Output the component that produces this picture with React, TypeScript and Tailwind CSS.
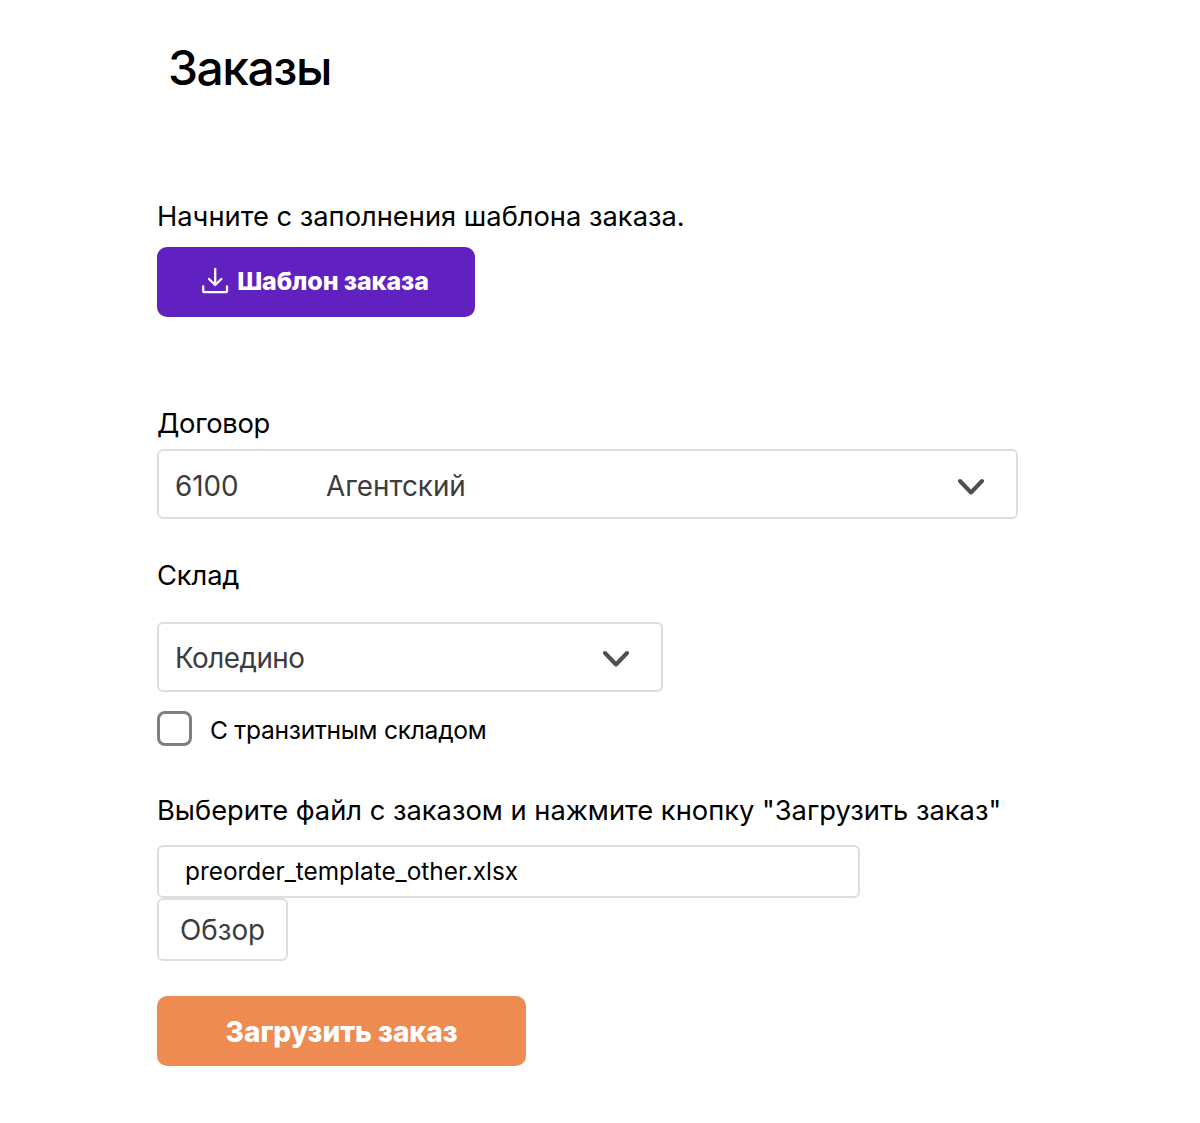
import { useState } from 'react'

const Chevron = () => (
  <svg width="28" height="18" viewBox="0 0 28 18" fill="none">
    <path
      d="M3 4 L14 15.5 L25 4"
      stroke="#4f4f50"
      strokeWidth="4"
      strokeLinecap="round"
      strokeLinejoin="round"
    />
  </svg>
)

const DownloadIcon = () => (
  <svg
    className="mr-2"
    width="28"
    height="28"
    viewBox="0 0 28 28"
    fill="none"
    stroke="currentColor"
    strokeWidth="2.3"
    strokeLinecap="round"
    strokeLinejoin="round"
  >
    <path d="M14.2 1.8v16M8 12l6.2 6 6.2-6M2.2 19.5v4.2q0 1.5 1.5 1.5h20.8q1.5 0 1.5-1.5v-4.2" />
  </svg>
)

const App = () => {
  const [transit, setTransit] = useState(false)

  return (
    <main className="min-h-[1123px] bg-white pl-[157px] font-['Inter','Liberation_Sans',sans-serif] text-[27.3px] leading-8 text-black">
      <h1 className="pt-[39px] pl-[11px] text-[48px] leading-[57px] font-[450] tracking-[-1.5px]">Заказы</h1>

      <section className="mt-[105px]">
        <p className="whitespace-nowrap">Начните с заполнения шаблона заказа.</p>
        <button className="mt-[14px] flex h-[70px] w-[318px] items-center justify-center rounded-[10px] bg-[#6120c0] pr-[2px] pb-0.5 text-[25px] font-extrabold tracking-[-0.1px] text-white">
          <DownloadIcon />
          <span>Шаблон заказа</span>
        </button>
      </section>

      <section className="mt-[91px]">
        <label className="block font-[430] tracking-[-0.3px]">Договор</label>
        <div className="mt-[9px] flex h-[70px] w-[861px] items-center rounded-md border-2 border-[#dedede] pt-[3px] pr-[31px] pl-4 text-[27.8px] text-[#3c3c3e]">
          <span className="w-[151px]">6100</span>
          <span className="flex-1">Агентский</span>
          <Chevron />
        </div>
      </section>

      <section className="mt-[41px]">
        <label className="block font-[430] tracking-[-0.1px]">Склад</label>
        <div className="mt-[30px] flex h-[70px] w-[506px] items-center justify-between rounded-md border-2 border-[#dedede] pt-px pr-[31px] pl-4 text-[27.8px] tracking-[-0.5px] text-[#3c3c3e]">
          <span>Коледино</span>
          <Chevron />
        </div>
        <label className="mt-[18px] flex h-[37px] items-center text-[24.6px] font-[430] tracking-[-0.27px]">
          <input
            type="checkbox"
            checked={transit}
            onChange={(e) => setTransit(e.target.checked)}
            className="mr-[18px] size-[35px] appearance-none rounded-lg border-[3px] border-[#7f7f7f]"
          />
          <span className="pt-[3px]">С транзитным складом</span>
        </label>
      </section>

      <section className="mt-[48px]">
        <p className="whitespace-nowrap">Выберите файл с заказом и нажмите кнопку "Загрузить заказ"</p>
        <div className="mt-[18px] flex h-[53px] w-[703px] items-center rounded-md border-2 border-[#dedede] pb-0.5 pl-[26px] text-[24.4px] font-[430]">
          preorder_template_other.xlsx
        </div>
        <button className="flex h-[63px] w-[131px] items-center justify-center rounded-md border-2 border-[#dedede] pt-px text-[27.8px] text-[#3c3c3e]">
          Обзор
        </button>
        <button className="mt-[35px] flex h-[70px] w-[369px] items-center justify-center rounded-[10px] bg-[#ed8b52] pt-0.5 text-[28px] font-extrabold text-white">
          Загрузить заказ
        </button>
      </section>
    </main>
  )
}

export default App
